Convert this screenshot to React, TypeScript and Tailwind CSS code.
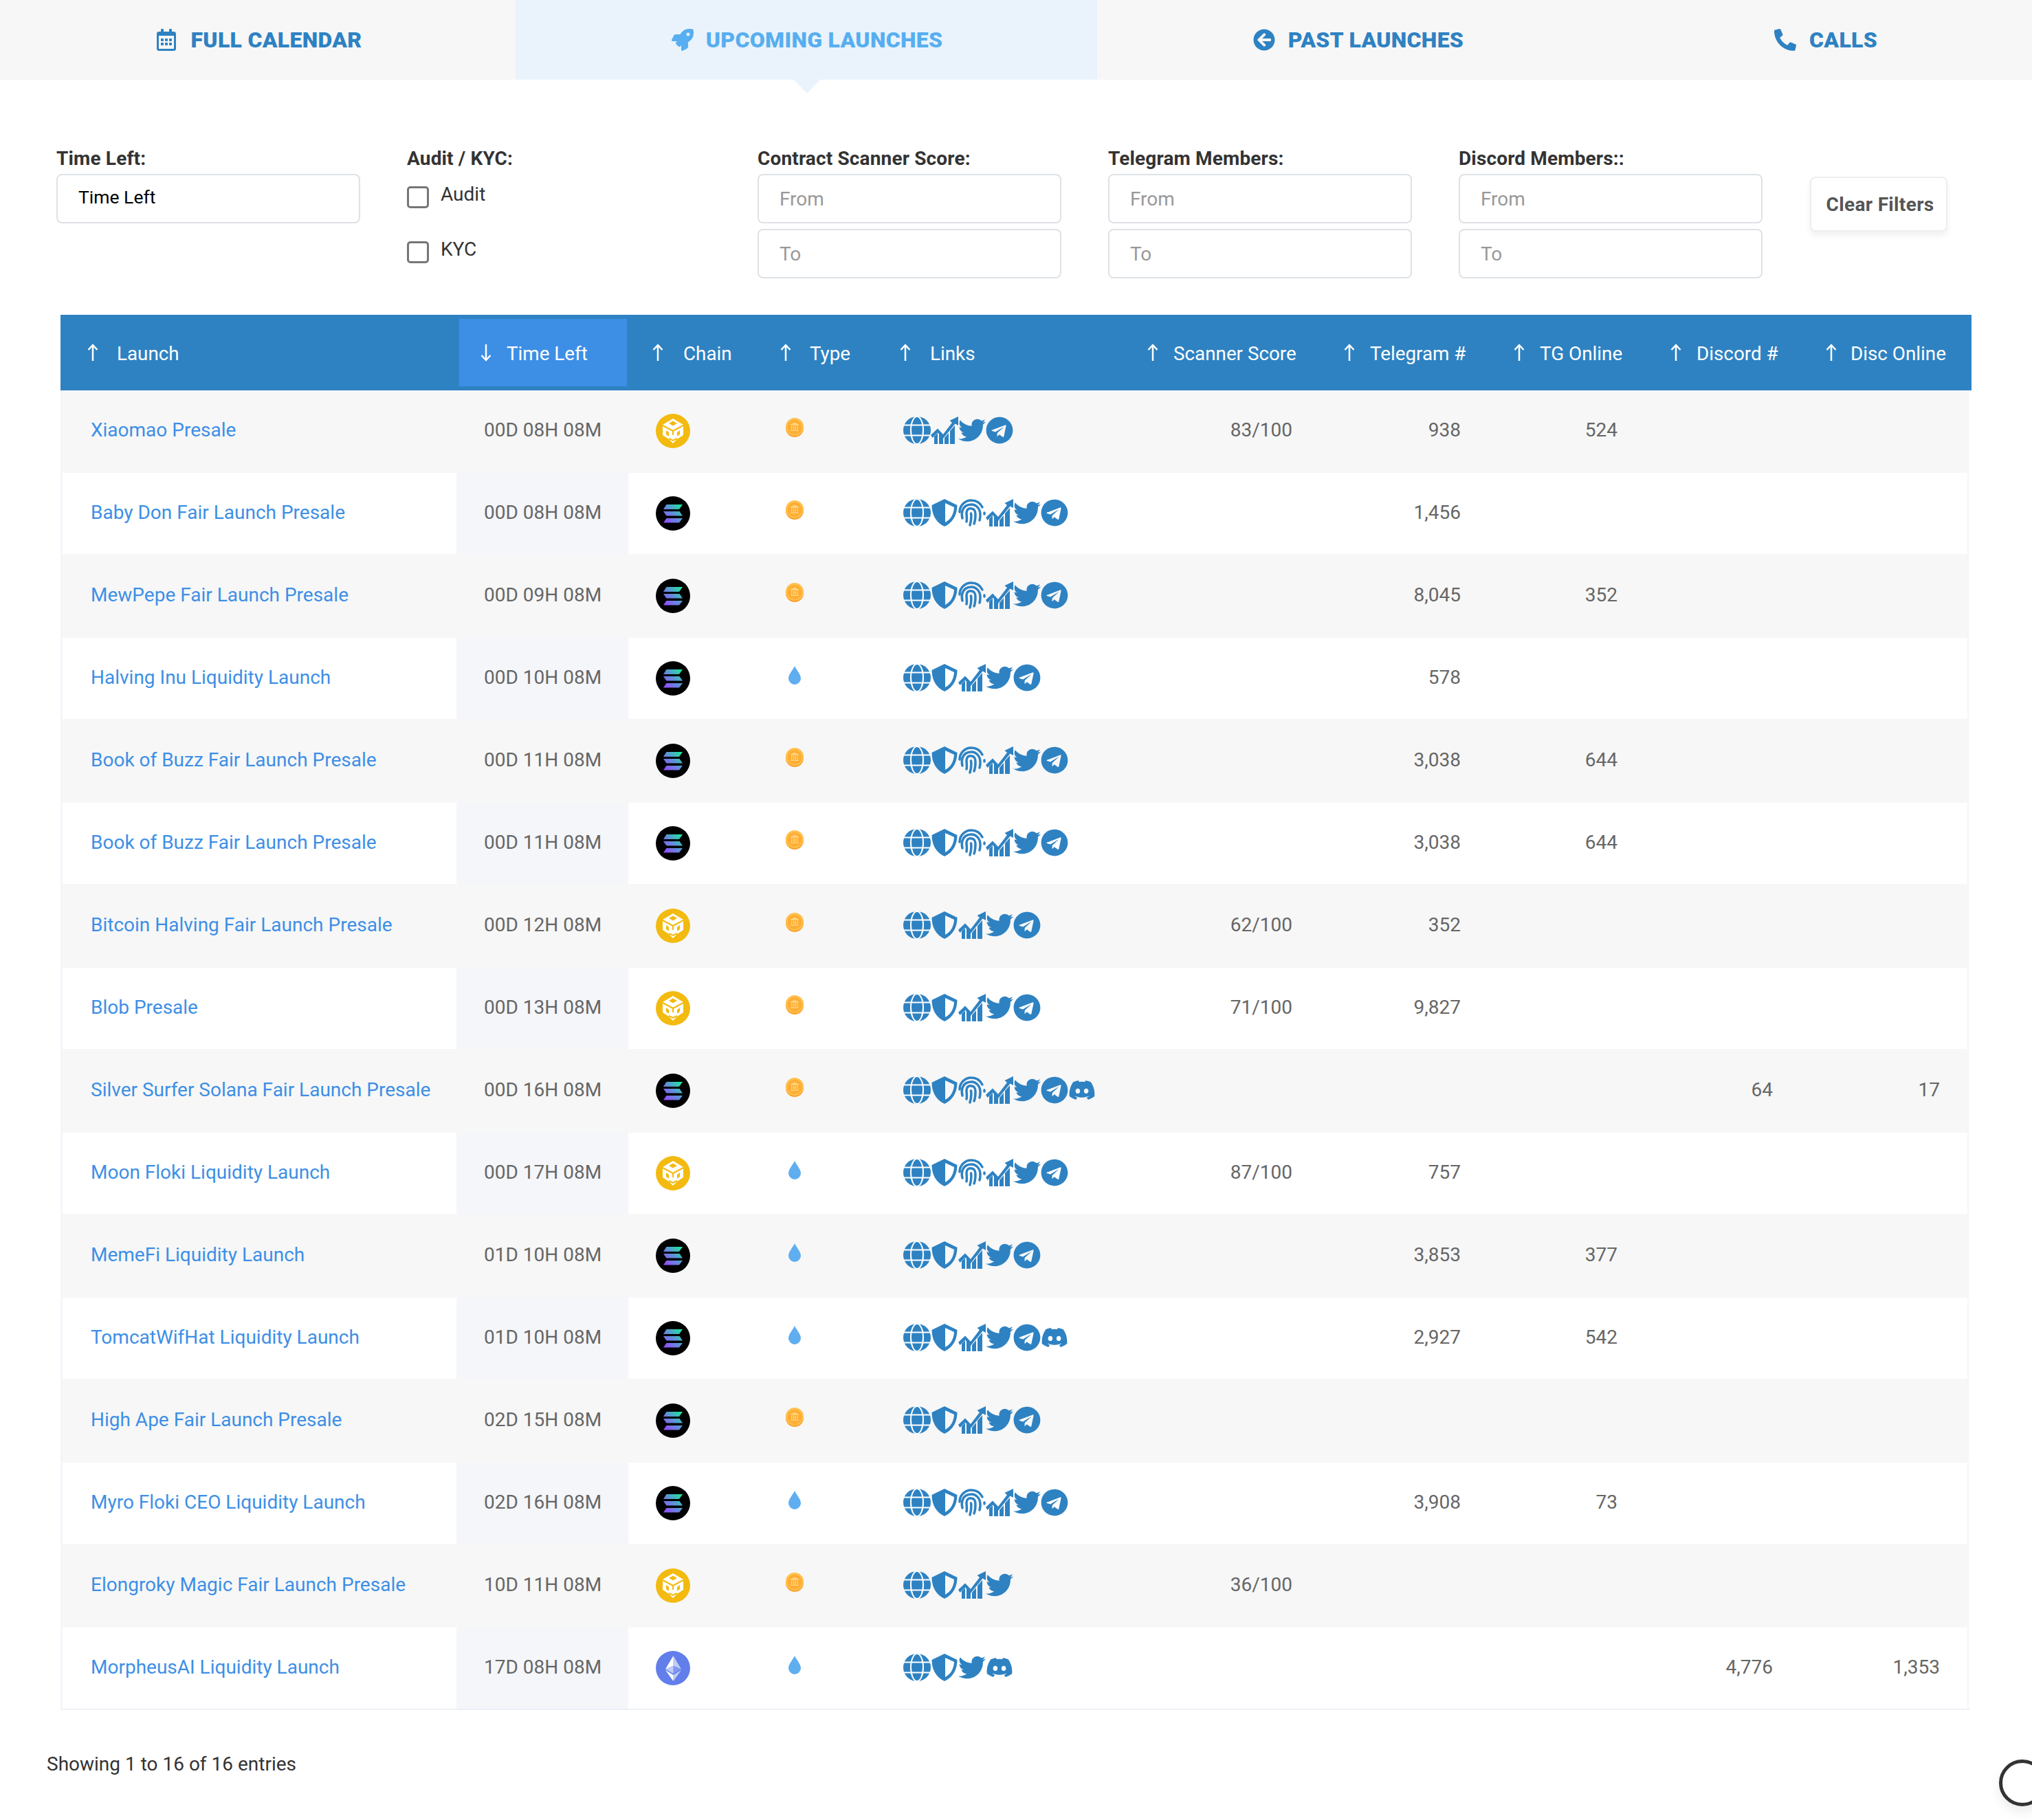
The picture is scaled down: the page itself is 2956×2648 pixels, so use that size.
import React from 'react';
import { FaRegCalendarAlt, FaRocket, FaArrowCircleLeft, FaPhoneAlt, FaTwitter, FaTelegram, FaDiscord } from 'react-icons/fa';

type Chain = 'bnb' | 'sol' | 'eth';
type Kind = 'coin' | 'drop';
type LinkKey = 'web' | 'audit' | 'kyc' | 'chart' | 'tw' | 'tg' | 'dc';

interface Row {
  name: string;
  time: string;
  chain: Chain;
  type: Kind;
  links: LinkKey[];
  score?: string;
  telegram?: string;
  tgOnline?: string;
  discord?: string;
  discOnline?: string;
}

const rows: Row[] = [
  { name: 'Xiaomao Presale', time: '00D 08H 08M', chain: 'bnb', type: 'coin', links: ['web', 'chart', 'tw', 'tg'], score: '83/100', telegram: '938', tgOnline: '524' },
  { name: 'Baby Don Fair Launch Presale', time: '00D 08H 08M', chain: 'sol', type: 'coin', links: ['web', 'audit', 'kyc', 'chart', 'tw', 'tg'], telegram: '1,456' },
  { name: 'MewPepe Fair Launch Presale', time: '00D 09H 08M', chain: 'sol', type: 'coin', links: ['web', 'audit', 'kyc', 'chart', 'tw', 'tg'], telegram: '8,045', tgOnline: '352' },
  { name: 'Halving Inu Liquidity Launch', time: '00D 10H 08M', chain: 'sol', type: 'drop', links: ['web', 'audit', 'chart', 'tw', 'tg'], telegram: '578' },
  { name: 'Book of Buzz Fair Launch Presale', time: '00D 11H 08M', chain: 'sol', type: 'coin', links: ['web', 'audit', 'kyc', 'chart', 'tw', 'tg'], telegram: '3,038', tgOnline: '644' },
  { name: 'Book of Buzz Fair Launch Presale', time: '00D 11H 08M', chain: 'sol', type: 'coin', links: ['web', 'audit', 'kyc', 'chart', 'tw', 'tg'], telegram: '3,038', tgOnline: '644' },
  { name: 'Bitcoin Halving Fair Launch Presale', time: '00D 12H 08M', chain: 'bnb', type: 'coin', links: ['web', 'audit', 'chart', 'tw', 'tg'], score: '62/100', telegram: '352' },
  { name: 'Blob Presale', time: '00D 13H 08M', chain: 'bnb', type: 'coin', links: ['web', 'audit', 'chart', 'tw', 'tg'], score: '71/100', telegram: '9,827' },
  { name: 'Silver Surfer Solana Fair Launch Presale', time: '00D 16H 08M', chain: 'sol', type: 'coin', links: ['web', 'audit', 'kyc', 'chart', 'tw', 'tg', 'dc'], discord: '64', discOnline: '17' },
  { name: 'Moon Floki Liquidity Launch', time: '00D 17H 08M', chain: 'bnb', type: 'drop', links: ['web', 'audit', 'kyc', 'chart', 'tw', 'tg'], score: '87/100', telegram: '757' },
  { name: 'MemeFi Liquidity Launch', time: '01D 10H 08M', chain: 'sol', type: 'drop', links: ['web', 'audit', 'chart', 'tw', 'tg'], telegram: '3,853', tgOnline: '377' },
  { name: 'TomcatWifHat Liquidity Launch', time: '01D 10H 08M', chain: 'sol', type: 'drop', links: ['web', 'audit', 'chart', 'tw', 'tg', 'dc'], telegram: '2,927', tgOnline: '542' },
  { name: 'High Ape Fair Launch Presale', time: '02D 15H 08M', chain: 'sol', type: 'coin', links: ['web', 'audit', 'chart', 'tw', 'tg'] },
  { name: 'Myro Floki CEO Liquidity Launch', time: '02D 16H 08M', chain: 'sol', type: 'drop', links: ['web', 'audit', 'kyc', 'chart', 'tw', 'tg'], telegram: '3,908', tgOnline: '73' },
  { name: 'Elongroky Magic Fair Launch Presale', time: '10D 11H 08M', chain: 'bnb', type: 'coin', links: ['web', 'audit', 'chart', 'tw'], score: '36/100' },
  { name: 'MorpheusAI Liquidity Launch', time: '17D 08H 08M', chain: 'eth', type: 'drop', links: ['web', 'audit', 'tw', 'dc'], discord: '4,776', discOnline: '1,353' },
];

const Globe = () => (
  <svg viewBox="0 0 40 40" className="w-[40px] h-[40px]">
    <circle cx="20" cy="20" r="20" fill="#2e82c2" />
    <g fill="none" stroke="#fff" strokeWidth="2">
      <ellipse cx="20" cy="20" rx="9" ry="20" />
      <path d="M0 12.5h40M0 27.5h40" />
    </g>
  </svg>
);

const Shield = () => (
  <svg viewBox="0 0 40 40" className="w-[40px] h-[40px]">
    <path
      fillRule="evenodd"
      fill="#2e82c2"
      d="M20 0l18.500 9c0 13-5.500 25-18.500 31C7 34 1.500 22 1.500 9zM21 6v28c8-4 12.500-12 13-22z"
    />
  </svg>
);

const Fingerprint = () => (
  <svg viewBox="0 0 40 40" className="w-[40px] h-[40px]" fill="none" stroke="#2e82c2" strokeWidth="3.500" strokeLinecap="round">
    <path d="M2 19C2 9 10 2 19 2c8 0 13 4 16 10" />
    <path d="M6 28c-1-4-1-8 0-11 2-6 7-9 13-9 8 0 13 7 13 15 0 3 0 5-1 8" />
    <path d="M12 33c1-4 0-9 0-13 0-4 3-7 7-6 4 0 6 4 6 8 0 4 0 9-2 14" />
    <path d="M18.500 21c1 6 0 12-1.500 17" />
    <path d="M38 20v2" />
  </svg>
);

const Chart = () => (
  <svg viewBox="0 0 40 40" className="w-[40px] h-[40px]">
    <g fill="#2e82c2">
      <path d="M5 29l5-5v16H5z" />
      <path d="M12 24l6 6v10h-6z" />
      <path d="M20 31l6-7v16h-6z" />
      <path d="M28 21l7-8v27h-7z" />
      <path d="M0 27l10-9.500 8 8.500L31 9l-3.500-3L40 0v13l-4.500-2.500L18 32l-8-8.500-7.500 7.500z" />
    </g>
  </svg>
);

const BnbLogo = () => (
  <svg viewBox="0 0 50 50" className="w-[50px] h-[50px]">
    <circle cx="25" cy="25" r="25" fill="#f3ba0f" />
    <path d="M25 7l15 9v15l-9 6-6 6-6-6-9-6V16z" fill="#fff" />
    <path d="M25 10.500l6 3.500-6 3.500-6-3.500z" fill="#f3ba0f" />
    <path d="M15 24v6l4 3v-6zM35 24v6l-4 3v-6z" fill="#f3ba0f" />
    <path d="M10 17l15 8 15-8M19 36l6 3 6-3M25 25v6" fill="none" stroke="#f3ba0f" strokeWidth="2" />
  </svg>
);

const SolLogo = () => (
  <svg viewBox="0 0 50 50" className="w-[50px] h-[50px]">
    <defs>
      <linearGradient id="solGrad" gradientUnits="userSpaceOnUse" x1="11" y1="38" x2="39" y2="12">
        <stop offset="0" stopColor="#9945ff" />
        <stop offset="0.5" stopColor="#5f8fd8" />
        <stop offset="1" stopColor="#14f195" />
      </linearGradient>
    </defs>
    <circle cx="25" cy="25" r="25" fill="#000" />
    <g fill="url(#solGrad)">
      <path d="M15.500 12H39l-5 7H11z" />
      <path d="M11 22h23.500l4.500 6.500H15.500z" />
      <path d="M15.500 32H39l-5 6.500H11z" />
    </g>
  </svg>
);

const EthLogo = () => (
  <svg viewBox="0 0 50 50" className="w-[50px] h-[50px]">
    <circle cx="25" cy="25" r="25" fill="#627eea" />
    <path d="M25.500 7v14.500l11.500 5z" fill="#fff" fillOpacity=".6" />
    <path d="M25.500 7L14 26.500l11.500-5z" fill="#fff" />
    <path d="M25.500 35v9l11.500-16z" fill="#fff" fillOpacity=".6" />
    <path d="M25.500 35v9L14 28z" fill="#fff" />
    <path d="M25.500 33l11.500-6.500-11.500-5z" fill="#fff" fillOpacity=".2" />
    <path d="M14 26.500L25.500 33V21.500z" fill="#fff" fillOpacity=".6" />
  </svg>
);

const Coin = () => (
  <svg viewBox="0 0 28 28" className="w-[28px] h-[28px]">
    <circle cx="14" cy="15" r="13" fill="#fb9f26" />
    <circle cx="14" cy="13" r="13" fill="#ffc04f" />
    <circle cx="14" cy="13.500" r="10.500" fill="#ffae33" />
    <path d="M14 6.500l6 3v1.500H8V9.500zM9 12h1.500v4.500H9zm3 0h1.500v4.500H12zm2.500 0H16v4.500h-1.500zm3 0H19v4.500h-1.500zM8 17.500h12V19H8z" fill="#ffd27a" />
  </svg>
);

const Drop = () => (
  <svg viewBox="0 0 20 28" className="w-[20px] h-[28px]">
    <path d="M10 1c2 5 9 12 9 18a9 9 0 0 1-18 0c0-6 7-13 9-18z" fill="#5faef0" />
  </svg>
);

const chainLogos: Record<Chain, React.ReactNode> = {
  bnb: <BnbLogo />,
  sol: <SolLogo />,
  eth: <EthLogo />,
};

const linkIcons: Record<LinkKey, React.ReactNode> = {
  web: <Globe />,
  audit: <Shield />,
  kyc: <Fingerprint />,
  chart: <Chart />,
  tw: <FaTwitter size={40} />,
  tg: <FaTelegram size={40} />,
  dc: <FaDiscord size={40} />,
};

const SortArrow = ({ down }: { down?: boolean }) => (
  <svg viewBox="0 0 18 26" className={`w-[18px] h-[26px] shrink-0 ${down ? 'rotate-180' : ''}`}>
    <path d="M9 25V2M2.500 9L9 2l6.500 7" fill="none" stroke="#fff" strokeWidth="2.500" />
  </svg>
);

const columns = [
  { label: 'Launch', cls: 'pl-[34px] gap-[26px]' },
  { label: 'Time Left', cls: 'pl-[30px] gap-[21px]' },
  { label: 'Chain', cls: 'pl-[30px] gap-[28px]' },
  { label: 'Type', cls: 'pl-[28px] gap-[26px]' },
  { label: 'Links', cls: 'pl-[30px] gap-[27px]' },
  { label: 'Scanner Score', cls: 'pl-[30px] gap-[21px]' },
  { label: 'Telegram #', cls: 'pl-[30px] gap-[21px]' },
  { label: 'TG Online', cls: 'pl-[32px] gap-[21px]' },
  { label: 'Discord #', cls: 'pl-[32px] gap-[21px]' },
  { label: 'Disc Online', cls: 'pl-[32px] gap-[19px]' },
];

const filterLabel = 'font-bold tracking-[0.15px] text-[#333] h-[36px] leading-[36px] mt-[-22px] mb-[4px]';

const RangeFilter = ({ label }: { label: string }) => (
  <div className="w-[442px] mr-[68px] flex flex-col">
    <label className={filterLabel}>{label}</label>
    <input placeholder="From" className="h-[72px] border-2 border-[#dee2e6] rounded-[8px] pl-[30px] mb-[8px] placeholder:text-[#999] outline-none" />
    <input placeholder="To" className="h-[72px] border-2 border-[#dee2e6] rounded-[8px] pl-[30px] placeholder:text-[#999] outline-none" />
  </div>
);

const numCell = 'pr-[40px] pb-[2px] text-right align-middle';

export default function App() {
  return (
    <div className="relative w-[2956px] h-[2648px] overflow-hidden bg-white font-['Roboto',sans-serif] text-[28px] text-[#333]">
      <nav className="flex h-[116px] bg-[#f7f7f7] text-[32px] font-black tracking-[0.3px] uppercase text-[#2e82c2]">
        <a className="w-[750px] flex items-center justify-center gap-[20px] pl-[2px]">
          <FaRegCalendarAlt size={32} />
          <span>Full Calendar</span>
        </a>
        <a className="relative w-[846px] flex items-center justify-center gap-[18px] bg-[#eaf3fc] text-[#57aef0] pl-[2px]">
          <FaRocket size={32} />
          <span>Upcoming Launches</span>
          <span className="absolute top-full left-[405px] border-x-[19px] border-x-transparent border-t-[20px] border-t-[#eaf3fc]" />
        </a>
        <a className="w-[760px] flex items-center justify-center gap-[19px]">
          <FaArrowCircleLeft size={32} />
          <span>Past Launches</span>
        </a>
        <a className="w-[600px] flex items-center justify-center gap-[19px]">
          <FaPhoneAlt size={32} />
          <span>Calls</span>
        </a>
      </nav>

      <section className="flex pl-[82px] pt-[119px] h-[342px] items-start">
        <div className="w-[442px] mr-[68px] flex flex-col">
          <label className={filterLabel}>Time Left:</label>
          <div className="h-[72px] border-2 border-[#dee2e6] rounded-[8px] pl-[30px] flex items-center text-black text-[26.5px] pb-[4px]">Time Left</div>
        </div>
        <div className="w-[442px] mr-[68px] flex flex-col">
          <label className={filterLabel}>Audit / KYC:</label>
          <label className="flex gap-[17px] items-start mt-[16px] h-[48px]">
            <span className="w-[32px] h-[32px] mt-[2px] border-[3px] border-[#767676] rounded-[5px]" />
            <span className="leading-[28px]">Audit</span>
          </label>
          <label className="flex gap-[17px] items-start mt-[32px] h-[48px]">
            <span className="w-[32px] h-[32px] mt-[2px] border-[3px] border-[#767676] rounded-[5px]" />
            <span className="leading-[28px]">KYC</span>
          </label>
        </div>
        <RangeFilter label="Contract Scanner Score:" />
        <RangeFilter label="Telegram Members:" />
        <RangeFilter label="Discord Members::" />
        <button className="w-[200px] h-[80px] mt-[22px] ml-[1px] pt-[2px] pl-[4px] border-2 border-[#eeeef2] rounded-[8px] font-bold tracking-[0.35px] text-[#555] shadow-[0_6px_10px_rgba(0,0,0,0.06)] bg-white whitespace-nowrap">
          Clear Filters
        </button>
      </section>

      <table className="ml-[88px] w-[2780px] table-fixed border-separate border-spacing-0 text-[#666]">
        <colgroup>
          <col className="w-[576px]" />
          <col className="w-[250px]" />
          <col className="w-[188px]" />
          <col className="w-[172px]" />
          <col className="w-[360px]" />
          <col className="w-[286px]" />
          <col className="w-[245px]" />
          <col className="w-[228px]" />
          <col className="w-[226px]" />
          <col className="w-[249px]" />
        </colgroup>
        <thead>
          <tr className="h-[110px] bg-[#2e82c2] text-white">
            {columns.map((c, i) => (
              <th
                key={c.label}
                className={`border-y-[6px] border-l-[4px] border-r-[2px] border-[#2e82c2] font-normal text-left whitespace-nowrap text-[27.8px] ${i === 1 ? 'bg-[#3d8fe6]' : ''}`}
              >
                <span className={`flex items-center ${c.cls}`}>
                  <SortArrow down={i === 1} />
                  <span className="pt-[4px]">{c.label}</span>
                </span>
              </th>
            ))}
          </tr>
        </thead>
        <tbody>
          {rows.map((r, i) => {
            const odd = i % 2 === 0;
            const last = i === rows.length - 1;
            const rowBg = odd ? 'bg-[#f7f7f7]' : 'bg-white';
            const edge = last ? 'border-b-2 border-[#eef0f7]' : 'border-b-2 border-[#f7f7f7]';
            return (
              <tr key={i} className={`h-[120px] ${rowBg}`}>
                <td className={`pl-[41px] pb-[2px] border-l-[3px] border-l-[#f5f6fb] align-middle ${edge}`}>
                  <a className="text-[#3d8fe6] whitespace-nowrap">{r.name}</a>
                </td>
                <td className={`pl-[40px] pb-[2px] align-middle whitespace-nowrap ${odd ? '' : 'bg-[#f5f6fa]'} ${edge}`}>{r.time}</td>
                <td className={`pl-[40px] align-middle ${edge}`}>{chainLogos[r.chain]}</td>
                <td className={`pb-[10px] pl-[40px] align-middle ${edge}`}>{r.type === 'coin' ? <Coin /> : <span className="block ml-[4px]"><Drop /></span>}</td>
                <td className={`pl-[40px] pb-[2px] align-middle ${edge}`}>
                  <div className="flex text-[#2e82c2]">
                    {r.links.map(l => (
                      <span key={l} className="w-[40px] h-[40px] shrink-0">{linkIcons[l]}</span>
                    ))}
                  </div>
                </td>
                <td className={`${numCell} ${edge}`}>{r.score}</td>
                <td className={`${numCell} ${edge}`}>{r.telegram}</td>
                <td className={`${numCell} ${edge}`}>{r.tgOnline}</td>
                <td className={`${numCell} ${edge}`}>{r.discord}</td>
                <td className={`${numCell} !pr-[42px] border-r-[4px] !border-r-white shadow-[inset_-2px_0_0_#f5f6fb] ${edge}`}>{r.discOnline}</td>
              </tr>
            );
          })}
        </tbody>
      </table>

      <p className="pl-[68px] pt-[58px] text-[#333]">Showing 1 to 16 of 16 entries</p>

      {/* chat widget clipped by the window edge */}
      <div className="absolute left-[2908px] top-[2560px] w-[68px] h-[68px] rounded-full border-[5px] border-[#333] bg-white shadow-[0_8px_16px_rgba(0,0,0,0.08)]" />
    </div>
  );
}
